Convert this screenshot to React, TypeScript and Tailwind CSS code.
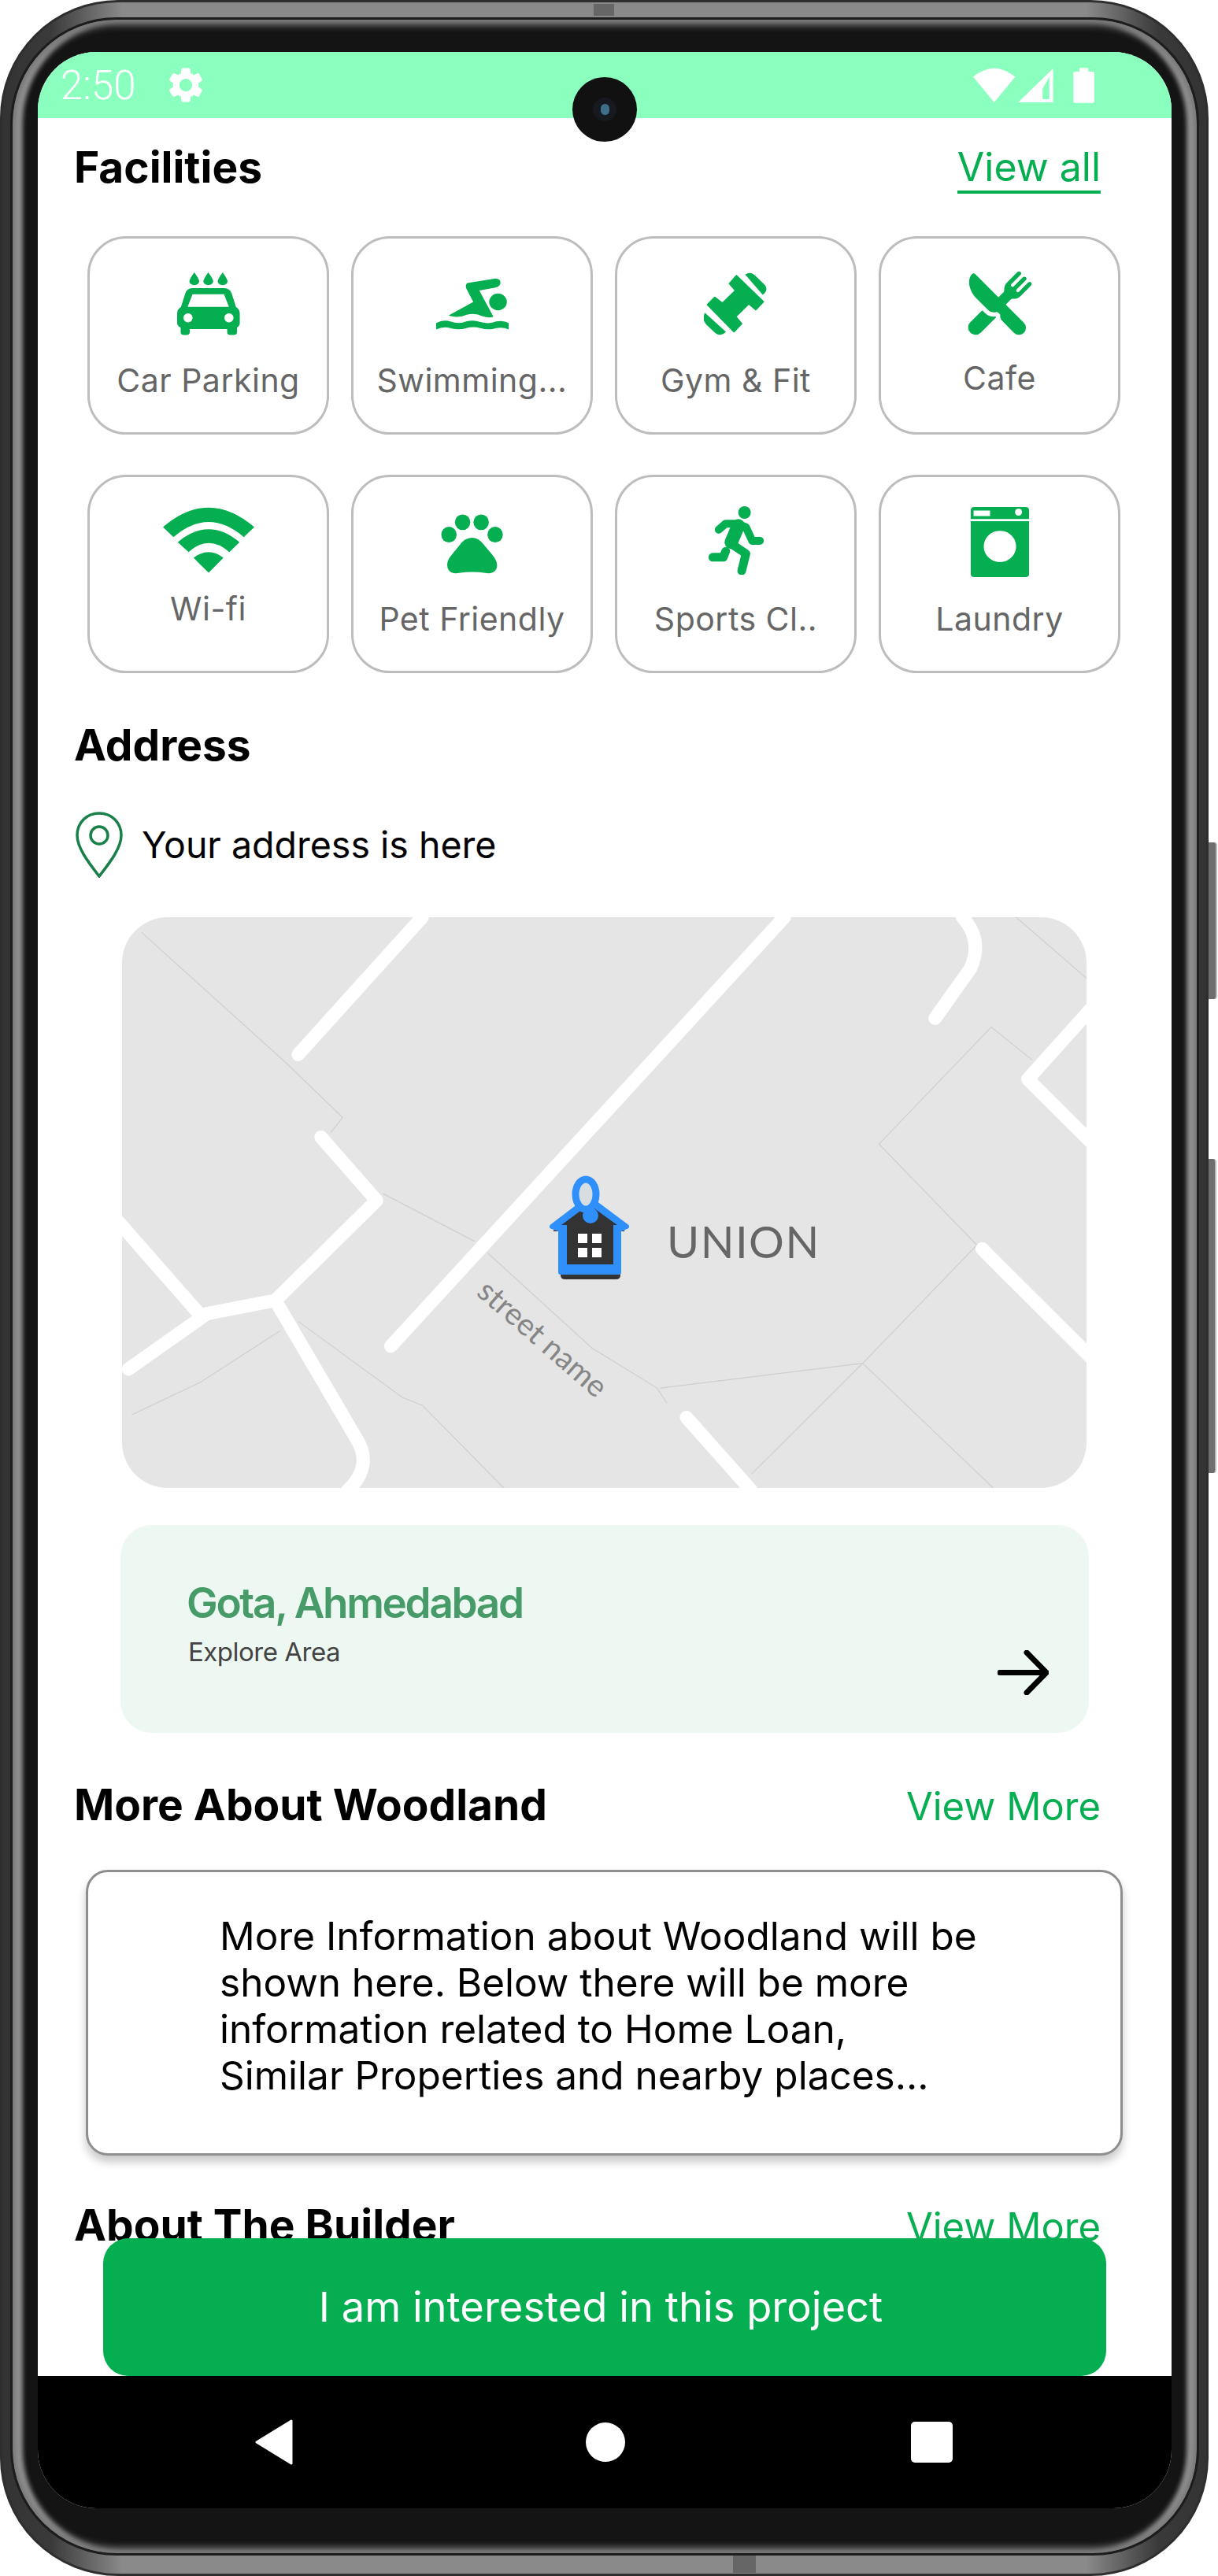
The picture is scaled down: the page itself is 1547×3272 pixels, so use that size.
import { ReactNode } from "react";
import { MdSettings } from "react-icons/md";
import { IoRestaurant } from "react-icons/io5";

const GREEN = "#05ae50";

function CarIcon() {
  return (
    <svg viewBox="302 148 180 208" preserveAspectRatio="none" className="w-[80px] h-[80px]" fill={GREEN}>
      <path d="M351 148 Q365 170 365 178 A14 12 0 0 1 337 178 Q337 170 351 148Z" />
      <path d="M391 148 Q405 170 405 178 A14 12 0 0 1 377 178 Q377 170 391 148Z" />
      <path d="M432 148 Q446 170 446 178 A14 12 0 0 1 418 178 Q418 170 432 148Z" />
      <path
        fillRule="evenodd"
        d="M345 200 H437 Q452 200 458 218 L470 262 Q481 270 481 285 V315 Q481 325 473 330 V345 Q473 355 463 355 H455 Q445 355 445 345 V335 H338 V345 Q338 355 328 355 H322 Q312 355 312 345 V330 Q302 325 302 315 V285 Q302 270 313 262 L325 218 Q330 200 345 200Z M346 220 H436 L450 262 H332Z M333 283 A13 15 0 1 0 333.1 283Z M450 283 A13 15 0 1 0 450.1 283Z"
      />
    </svg>
  );
}

function SwimIcon() {
  return (
    <svg viewBox="1040 155 205 173" preserveAspectRatio="none" className="w-[92px] h-[66px]" fill={GREEN}>
      <path d="M1128 172 L1208 157 Q1222 158 1222 172 Q1220 185 1205 188 L1162 197 L1202 284 Q1190 290 1170 282 Q1150 270 1125 278 Q1100 290 1075 280 L1145 235 L1125 190 Q1122 178 1128 172Z" />
      <ellipse cx="1215" cy="235" rx="25" ry="28" />
      <path d="M1040 305 Q1060 293 1080 300 Q1105 310 1125 300 Q1145 293 1165 302 Q1190 310 1210 300 Q1230 295 1245 305 V327 Q1230 318 1210 322 Q1190 330 1165 322 Q1145 315 1125 322 Q1105 330 1080 322 Q1060 315 1040 327Z" />
    </svg>
  );
}

function DumbbellIcon() {
  return (
    <svg viewBox="302 145 182 212" preserveAspectRatio="none" className="w-[81px] h-[81px]" fill={GREEN}>
      <path d="M395 158 L472 245 L450 272 L430 252 L393 295 L410 318 L388 345 L312 255 L333 230 L355 250 L392 208 L375 185 Z" stroke={GREEN} strokeWidth="4" strokeLinejoin="round" />
      <path d="M420 155 Q435 142 450 160 L475 188 Q488 205 470 222 Z" />
      <path d="M305 282 L365 345 Q350 362 335 350 L310 322 Q295 305 305 282Z" />
    </svg>
  );
}

function WifiIcon() {
  return (
    <svg viewBox="260 918 260 220" preserveAspectRatio="none" className="w-[116px] h-[84px]" fill={GREEN}>
      <path d="M260 985 Q390 855 520 985 L490 1018 Q390 918 290 1018 Z" />
      <path d="M302 1035 Q390 949 478 1035 L449 1068 Q390 1008 333 1068 Z" />
      <path d="M347 1087 Q390 1049 432 1087 L390 1137 Z" />
    </svg>
  );
}

function PawIcon() {
  return (
    <svg viewBox="1053 950 180 198" preserveAspectRatio="none" className="w-[80px] h-[76px]" fill={GREEN}>
      <ellipse cx="1076" cy="1018" rx="22" ry="26" />
      <ellipse cx="1115" cy="977" rx="22" ry="26" />
      <ellipse cx="1168" cy="977" rx="22" ry="26" />
      <ellipse cx="1208" cy="1018" rx="22" ry="26" />
      <path d="M1142 1028 Q1120 1028 1105 1055 L1080 1090 Q1065 1115 1075 1135 Q1085 1150 1105 1145 Q1142 1138 1180 1145 Q1205 1150 1212 1130 Q1218 1110 1200 1085 L1175 1050 Q1160 1028 1142 1028Z" />
    </svg>
  );
}

function RunIcon() {
  return (
    <svg viewBox="313 920 158 228" preserveAspectRatio="none" className="w-[70px] h-[87px]" fill="none" stroke={GREEN} strokeLinecap="round" strokeLinejoin="round">
      <ellipse cx="416" cy="941" rx="18" ry="21" fill={GREEN} stroke="none" />
      <path d="M342 998 L362 978 L395 978 L420 990 L432 1020 L438 1035 L460 1035" strokeWidth="10" vectorEffect="non-scaling-stroke" />
      <path d="M398 985 L378 1040" strokeWidth="17" vectorEffect="non-scaling-stroke" />
      <path d="M378 1045 L420 1078 L408 1135" strokeWidth="11" vectorEffect="non-scaling-stroke" />
      <path d="M362 1070 L355 1090 L325 1090" strokeWidth="11" vectorEffect="non-scaling-stroke" />
    </svg>
  );
}

function WasherIcon() {
  return (
    <svg viewBox="1062 925 166 233" preserveAspectRatio="none" className="w-[74px] h-[89px]">
      <path fillRule="evenodd" fill={GREEN} d="M1072 925 H1218 Q1228 925 1228 935 V965 H1062 V935 Q1062 925 1072 925Z M1070 937 V955 H1117 V937Z" />
      <ellipse cx="1198" cy="942" rx="10" ry="12" fill="#fff" />
      <path fillRule="evenodd" fill={GREEN} d="M1062 972 H1228 V1148 Q1228 1158 1218 1158 H1072 Q1062 1158 1062 1148Z M1145 1004 A46 52 0 1 0 1145.1 1004Z" />
    </svg>
  );
}

type Facility = { label: string; icon: ReactNode; box: string; text: string };

const facilities: Facility[] = [
  { label: "Car Parking", icon: <CarIcon />, box: "-mt-[3px]", text: "mt-[17px]" },
  { label: "Swimming...", icon: <SwimIcon />, box: "-mt-[3px]", text: "mt-[17px]" },
  { label: "Gym & Fit", icon: <DumbbellIcon />, box: "-mt-[4px]", text: "mt-[18px]" },
  { label: "Cafe", icon: <IoRestaurant size={86} color={GREEN} />, box: "-mt-[4px]", text: "mt-[15px]" },
  { label: "Wi-fi", icon: <WifiIcon />, box: "-mt-[6px]", text: "mt-[7px]" },
  { label: "Pet Friendly", icon: <PawIcon />, box: "-mt-[1px]", text: "mt-[15px]" },
  { label: "Sports Cl..", icon: <RunIcon />, box: "-mt-[6px]", text: "mt-[20px]" },
  { label: "Laundry", icon: <WasherIcon />, box: "-mt-[4px]", text: "mt-[18px]" },
];

function SectionHeader({ title, action, className }: { title: string; action: ReactNode; className: string }) {
  return (
    <div className={`flex items-center justify-between h-[70px] pl-[46px] pr-[90px] ${className}`}>
      <h2 className="text-[55px] font-bold text-black leading-none">{title}</h2>
      {action}
    </div>
  );
}

function MapView() {
  const roads = [
    "M490 30 L300 390",
    "M1045 30 L442 1155",
    "M1318 30 Q1350 90 1330 165 L1276 295",
    "M1515 270 L1418 455 L1515 620",
    "M335 607 L420 773 L265 1035 L160 1070 L40 1215",
    "M25 830 L148 1070",
    "M270 1050 L390 1400 Q415 1470 375 1535",
    "M895 1342 L995 1535",
    "M1348 900 L1515 1185",
  ];
  const lines = [
    "M60 70 L280 410 L368 555 L350 595",
    "M430 755 L570 880",
    "M590 910 L750 1160 L850 1265 L865 1305",
    "M855 1265 L1165 1200 L1340 890 L1190 625 L1362 318 L1425 405",
    "M1165 1200 L995 1490",
    "M1165 1200 L1365 1527",
    "M1400 30 L1508 190",
    "M300 1090 L460 1290 L490 1310 L615 1527",
    "M272 1115 L150 1250 L45 1335",
  ];
  return (
    <div className="relative ml-[107px] mt-[50px] w-[1225px] h-[725px] rounded-[58px] overflow-hidden bg-[#e5e5e6]">
      <svg viewBox="30 30 1478 1497" preserveAspectRatio="none" className="absolute inset-0 w-full h-full blur-[0.6px]" fill="none">
        {lines.map((d) => (
          <path key={d} d={d} stroke="#cfcfd3" strokeWidth="1.2" vectorEffect="non-scaling-stroke" />
        ))}
        {roads.map((d) => (
          <path key={d} d={d} stroke="#fff" strokeWidth="17" strokeLinecap="round" strokeLinejoin="round" vectorEffect="non-scaling-stroke" />
        ))}
      </svg>
      {/* house pin, coordinates relative to the map */}
      <svg viewBox="0 0 108 136" className="absolute left-[541px] top-[327px] w-[108px] h-[136px] blur-[0.5px]">
        <path d="M6 72 L52 36 L98 72 L92 72 L92 128 Q92 133 86 133 L22 133 Q16 133 16 128 L16 72Z" fill="#333" />
        <path d="M5 66 L52 30 L100 66 L90 70 L90 124 L16 124 L16 70Z" fill="#2f8ffb" stroke="#2f8ffb" strokeWidth="6" strokeLinejoin="round" />
        <path d="M17 64 L52 38 L88 64 L83 64 L83 114 L24 114 L24 64Z" fill="#333" />
        <ellipse cx="48" cy="25" rx="13" ry="19" fill="#d8dde2" stroke="#2f8ffb" strokeWidth="9" />
        <circle cx="54" cy="52" r="10" fill="#2f8ffb" />
        <rect x="38" y="75" width="12" height="12" fill="#fff" />
        <rect x="56" y="75" width="12" height="12" fill="#fff" />
        <rect x="38" y="93" width="12" height="12" fill="#fff" />
        <rect x="56" y="93" width="12" height="12" fill="#fff" />
      </svg>
      <span className="absolute left-[692px] top-[384px] text-[56px] leading-none font-['Lato',sans-serif] tracking-[1.5px] text-[#666]">UNION</span>
      <span className="absolute left-[420px] top-[515px] w-[230px] text-center text-[39px] leading-none font-['Lato',sans-serif] text-[#868686] rotate-[41deg]">street name</span>
    </div>
  );
}

export default function App() {
  return (
    <div className="relative w-[1547px] h-[3272px] bg-white overflow-hidden font-['Inter',sans-serif]">
      {/* side buttons */}
      <div className="absolute left-[1530px] top-[1070px] w-[16px] h-[199px] rounded-[4px] bg-[#6e6e6e] border-r-2 border-[#bbb]" />
      <div className="absolute left-[1530px] top-[1472px] w-[15px] h-[399px] rounded-[4px] bg-[#6e6e6e] border-r-2 border-[#bbb]" />

      {/* phone shell */}
      <div className="relative w-[1535px] h-[3272px] rounded-[150px] bg-[linear-gradient(to_right,#333_0,#3a3a3a_4%,#8a8a8a_10%,#8a8a8a_90%,#3a3a3a_96%,#333_100%)] border-[3px] border-[#2e2e2e] pl-[10px] pt-[19px] pr-[9px] pb-[23px]">
        <div className="absolute left-[751px] top-[2px] w-[26px] h-[15px] bg-[#666]" />
        <div className="absolute left-[928px] bottom-[1px] w-[29px] h-[22px] bg-[#666]" />
        <div className="w-full h-full rounded-[135px] bg-[#141414] pl-[35px] pr-[35px] pt-[44px] border-[3px] border-[#1d1d1d] shadow-[inset_0_0_10px_7px_#777,inset_12px_0_6px_#aaa,inset_-12px_0_6px_#aaa]">
          <div className="relative -ml-[3px] -mt-[3px] w-[1440px] h-[3120px] rounded-[74px] overflow-hidden bg-white flex flex-col">
            {/* status bar */}
            <div className="relative flex items-center h-[84px] shrink-0 bg-[#8affbe] pl-[29px] pr-[98px] text-white">
              <span className="font-['Roboto',sans-serif] font-light text-[51px] leading-none">2:50</span>
              <MdSettings size={54} className="ml-[36px]" />
              <div className="ml-auto flex items-center">
                <svg viewBox="915 255 323 136" preserveAspectRatio="none" className="w-[154px] h-[45px]" fill="#fff">
                  <path d="M915 290 Q971 225 1027 290 L971 388 Z" />
                  <path fillRule="evenodd" d="M1035 388 L1128 258 V388 Z M1100 376 H1118 V290 L1100 335Z" />
                  <rect x="1182" y="270" width="56" height="120" rx="5" />
                  <rect x="1198" y="256" width="24" height="16" rx="3" />
                </svg>
              </div>
            </div>

            {/* page content */}
            <div className="relative flex-1 min-h-0 overflow-hidden bg-white">
              <SectionHeader
                title="Facilities"
                className="mt-[27px]"
                action={<a className="text-[50px] leading-[60px] mt-[3px] text-[#05ae50] border-b-4 border-[#05ae50]">View all</a>}
              />
              <div className="ml-[63px] mt-[53px] grid grid-cols-[repeat(4,307px)] auto-rows-[252px] gap-x-[28px] gap-y-[51px]">
                {facilities.map((f) => (
                  <div key={f.label} className="flex flex-col items-center pt-[36px] rounded-[49px] border-[3px] border-[#bdbdbd]">
                    <div className={`flex items-center justify-center h-[100px] ${f.box}`}>{f.icon}</div>
                    <span className={`text-[41px] leading-[60px] tracking-[0.5px] text-[#666] ${f.text}`}>{f.label}</span>
                  </div>
                ))}
              </div>

              <SectionHeader title="Address" className="mt-[56px]" action={null} />
              <div className="flex items-center gap-[24px] ml-[48px] mt-[50px] h-[84px]">
                <svg viewBox="0 0 60 84" className="w-[60px] h-[84px]" fill="none" stroke="#1a8049" strokeWidth="3.5">
                  <path d="M30 2 C14 2 2 14 2 30 C2 48 21 70 30 82 C39 70 58 48 58 30 C58 14 46 2 30 2Z" />
                  <circle cx="30" cy="30" r="11" />
                </svg>
                <span className="text-[46.5px] leading-none text-black">Your address is here</span>
              </div>

              <MapView />

              <div className="relative ml-[105px] mt-[47px] w-[1230px] h-[264px] rounded-[40px] bg-[#eef8f2] pl-[84px] pt-[69px]">
                <div className="text-[53px] leading-[60px] font-semibold tracking-[-2.3px] text-[#479b69]">Gota, Ahmedabad</div>
                <div className="ml-[2px] mt-[12px] text-[33px] leading-[40px] tracking-[-0.5px] text-[#444]">Explore Area</div>
                <svg viewBox="0 0 65 57" className="absolute right-[51px] top-[159px] w-[65px] h-[57px]" fill="none" stroke="#000" strokeWidth="7" strokeLinecap="round" strokeLinejoin="round">
                  <path d="M3 28.5 H62 M37 3 L62 28.5 L37 54" />
                </svg>
              </div>

              <SectionHeader
                title="More About Woodland"
                className="mt-[56px]"
                action={<a className="text-[49px] leading-none mt-[4px] text-[#05ae50]">View More</a>}
              />
              <div className="ml-[61px] mt-[48px] w-[1317px] h-[363px] rounded-[28px] border-[3px] border-[#8e8e8e] bg-white shadow-[0_8px_12px_rgba(0,0,0,0.22)] pl-[167px] pt-[52px] text-[49.5px] leading-[59px] text-black">
                <p>More Information about Woodland will be</p>
                <p>shown here. Below there will be more</p>
                <p>information related to Home Loan,</p>
                <p>Similar Properties and nearby places...</p>
              </div>

              <SectionHeader
                title="About The Builder"
                className="mt-[53px]"
                action={<a className="text-[49px] leading-none mt-[4px] text-[#05ae50]">View More</a>}
              />

              <button className="absolute left-[83px] bottom-0 w-[1274px] h-[175px] pr-[10px] rounded-[32px] bg-[#05ae50] text-white text-[52.5px] leading-none font-normal">
                I am interested in this project
              </button>
            </div>

            {/* navigation bar */}
            <div className="relative flex items-center h-[168px] shrink-0 bg-black pl-[276px]">
              <svg viewBox="0 0 48 58" className="w-[48px] h-[58px]" fill="#fff" stroke="#fff" strokeWidth="3" strokeLinejoin="round">
                <path d="M46 2 L2 29 L46 56Z" />
              </svg>
              <div className="ml-[372px] w-[50px] h-[50px] rounded-full bg-white" />
              <div className="ml-[363px] w-[53px] h-[52px] rounded-[5px] bg-white" />
            </div>

            {/* camera cutout */}
            <div className="absolute left-[679px] top-[32px] w-[82px] h-[82px] rounded-full bg-[#111] flex items-center justify-center">
              <div className="w-[30px] h-[30px] rounded-full bg-[#161a20] flex items-center justify-center">
                <div className="w-[11px] h-[14px] rounded-full bg-[#3f6f88]" />
              </div>
            </div>
          </div>
        </div>
      </div>
    </div>
  );
}
